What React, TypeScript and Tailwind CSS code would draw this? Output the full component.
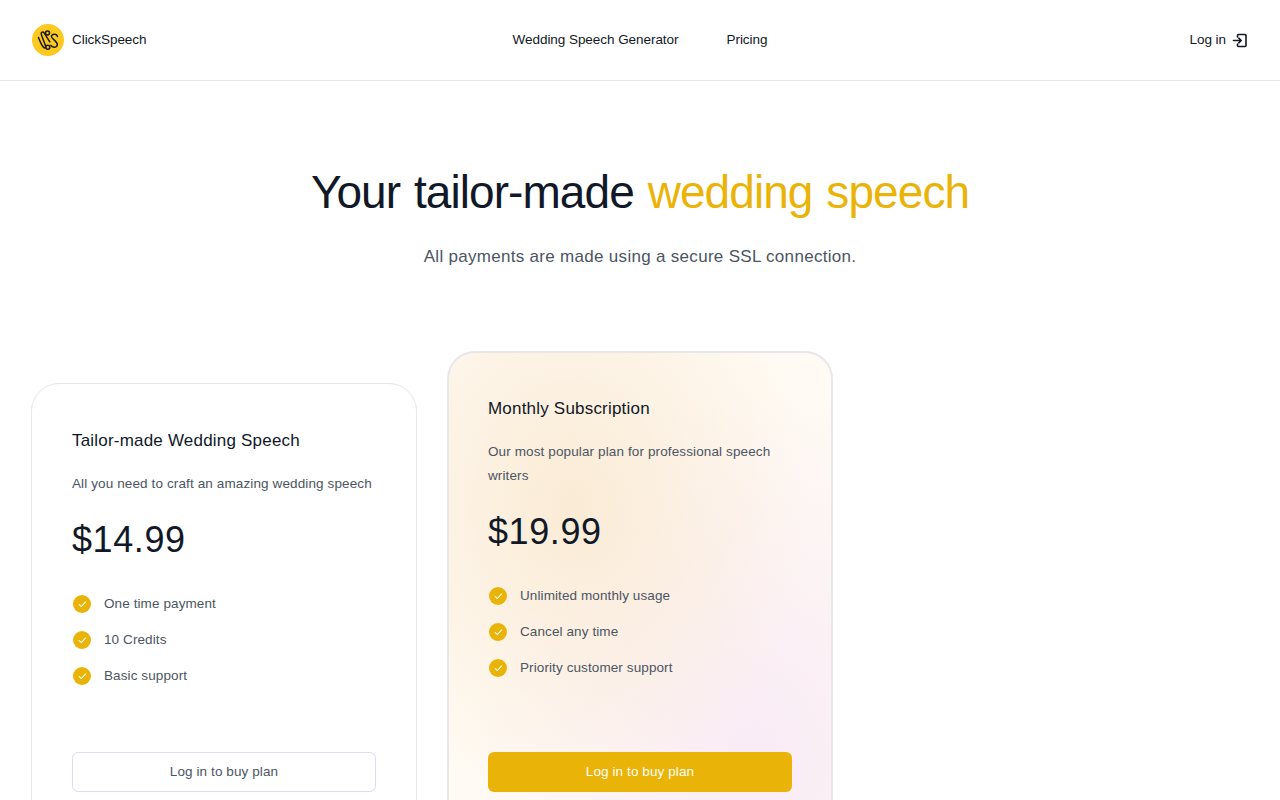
import { Check } from "lucide-react";

const sans = "font-['Liberation_Sans',Arial,sans-serif]";

const Logo = () => (
  <svg width="32" height="32" viewBox="0 0 32 32" fill="none">
    <circle cx="16" cy="16" r="16" fill="#fbc91f" />
    <g stroke="#1a1a1a" strokeWidth="1.5" strokeLinecap="round" strokeLinejoin="round">
      <path d="M6.500 13.500c1.500 4 3 7.500 5 9.800 1.200 1.300 2.600.4 2-1.500L9.300 10.500c-.6-2.200 1.500-3.400 2.800-1.600l5.700 9" />
      <circle cx="15.500" cy="9" r="2" />
      <circle cx="15.800" cy="23.200" r="2" />
      <path d="M25.500 12.500c-.6-2.600-5-3-6-.6-1 2.600 6.800 5.600 5.800 9.200-.8 2.800-5.400 2.600-6.400.2" />
    </g>
  </svg>
);

const LoginIcon = () => (
  <svg width="16" height="16" viewBox="0 0 16 16" fill="none" stroke="#111827" strokeWidth="1.6" strokeLinecap="round" strokeLinejoin="round">
    <path d="M5.500 5V3.500a1 1 0 0 1 1-1h6.500a1 1 0 0 1 1 1v10a1 1 0 0 1-1 1h-6.500a1 1 0 0 1-1-1V12" />
    <path d="M1.500 8.500h7.500M6.800 6.200 9.200 8.500l-2.400 2.300" />
  </svg>
);

const Feature = ({ text }: { text: string }) => (
  <li className="flex items-center gap-3 h-6">
    <span className="w-5 h-5 rounded-full bg-[#eab308] flex items-center justify-center shrink-0 scale-90">
      <Check size={11} strokeWidth={2.5} className="text-white" />
    </span>
    <span className="text-[13.5px] tracking-[0.1px] text-[#4b5563]">{text}</span>
  </li>
);

type PlanProps = {
  title: string;
  desc: string;
  price: string;
  features: string[];
  featured?: boolean;
};

const Plan = ({ title, desc, price, features, featured }: PlanProps) => (
  <article
    className={
      featured
        ? "flex flex-col h-[482px] rounded-[28px] border-2 border-[#e7e7ea] -m-px p-[39px] bg-[radial-gradient(ellipse_at_32%_32%,#faebd5_0%,rgba(250,235,213,0)_65%),radial-gradient(ellipse_at_80%_85%,#f9ebf6_0%,rgba(249,235,246,0)_65%),linear-gradient(#fffaf3,#fffaf3)]"
        : "flex flex-col h-[450px] rounded-[28px] border border-[#e5e7eb] -m-px p-10 bg-white"
    }
  >
    <h2 className="text-[17px] leading-[33px] tracking-[0.2px] text-[#111827]">{title}</h2>
    <p className="mt-[15px] text-[13.5px] leading-6 tracking-[0.12px] text-[#4b5563]">{desc}</p>
    <p className="mt-6 text-4xl leading-10 tracking-[0.6px] text-[#111827]">{price}</p>
    <ul className="mt-8 flex flex-col gap-3">
      {features.map((f) => (
        <Feature key={f} text={f} />
      ))}
    </ul>
    <button
      className={
        featured
          ? "mt-auto h-10 shrink-0 rounded-md bg-[#eab308] text-[13.5px] tracking-[0.1px] text-white"
          : "mt-auto h-10 shrink-0 rounded-md border border-[#e0dcf0] bg-white text-[13.5px] tracking-[0.1px] text-[#4b5563]"
      }
    >
      Log in to buy plan
    </button>
  </article>
);

export default function App() {
  return (
    <div className={`${sans} h-screen overflow-hidden bg-white`}>
      <header className="h-[81px] border-b border-[#e5e7eb] px-8 grid grid-cols-3 items-center text-[13.5px] tracking-[-0.05px] text-[#111827]">
        <a className="flex items-center gap-2 justify-self-start">
          <Logo />
          <span>ClickSpeech</span>
        </a>
        <nav className="flex gap-12 justify-self-center whitespace-nowrap">
          <a>Wedding Speech Generator</a>
          <a>Pricing</a>
        </nav>
        <a className="flex items-center gap-1.5 justify-self-end">
          Log in
          <LoginIcon />
        </a>
      </header>

      <section className="pt-[81px] text-center">
        <h1 className="text-[46px] leading-[60px] tracking-[-0.93px] [word-spacing:2px] text-[#111827]">
          Your tailor-made <span className="text-[#eab308]">wedding speech</span>
        </h1>
        <p className="mt-[21px] text-[17px] leading-7 tracking-[0.3px] text-[#4b5563]">
          All payments are made using a secure SSL connection.
        </p>
      </section>

      <section className="mt-[81px] px-8 grid grid-cols-3 gap-8 items-end">
        <Plan
          title="Tailor-made Wedding Speech"
          desc="All you need to craft an amazing wedding speech"
          price="$14.99"
          features={["One time payment", "10 Credits", "Basic support"]}
        />
        <Plan
          featured
          title="Monthly Subscription"
          desc="Our most popular plan for professional speech writers"
          price="$19.99"
          features={["Unlimited monthly usage", "Cancel any time", "Priority customer support"]}
        />
      </section>
    </div>
  );
}
